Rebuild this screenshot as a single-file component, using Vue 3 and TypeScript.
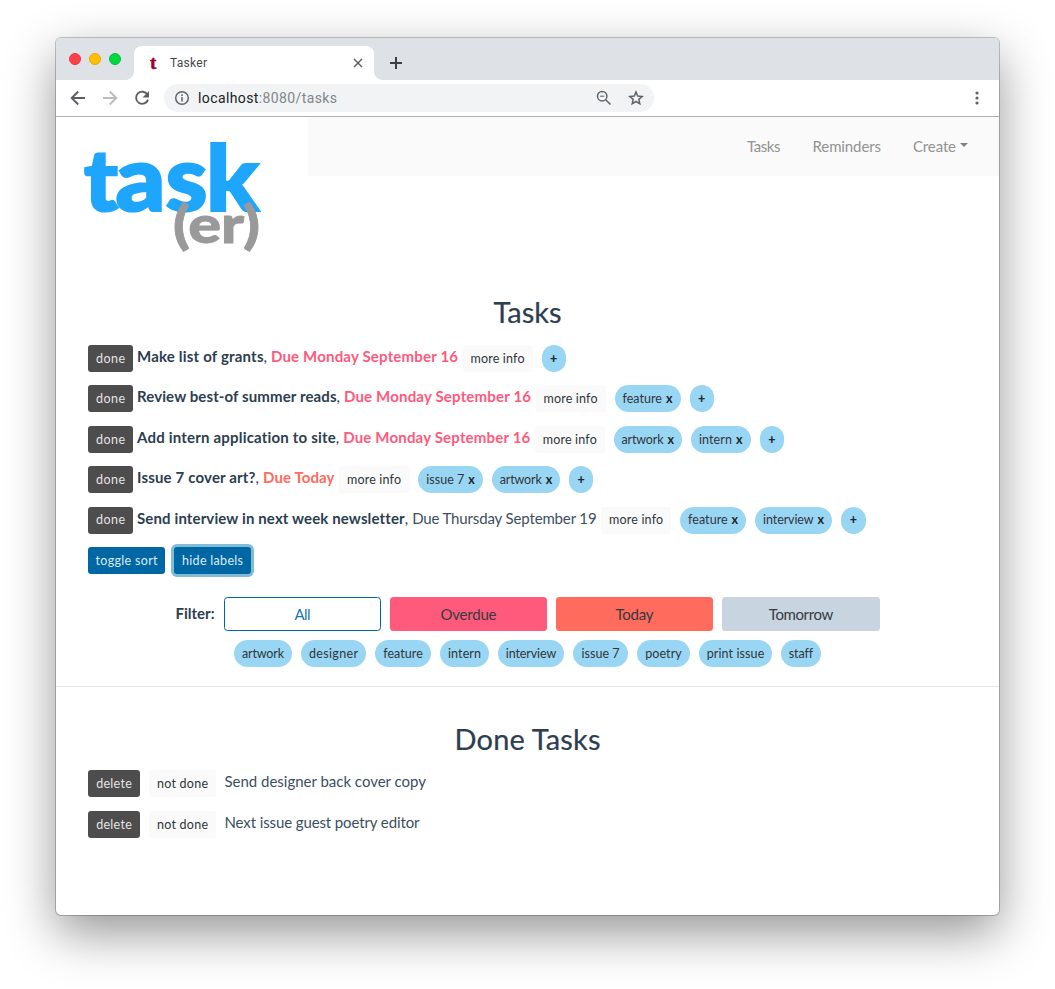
<script setup lang="ts">
interface Label { name: string; width: number; text: number }
interface Task {
  title: string
  titleWidth: number
  due: string
  dueWidth: number
  state: 'overdue' | 'today' | 'later'
  labels: Label[]
}

// Spreads the letters of an element so that its text spans the given width.
const vFit = {
  mounted(el: HTMLElement, binding: { value: number }) {
    const count = (el.textContent ?? '').length
    const natural = el.getBoundingClientRect().width
    if (count > 1) {
      el.style.letterSpacing = `${(binding.value - natural) / (count - 1)}px`
      el.style.marginRight = `${-(binding.value - natural) / (count - 1)}px`
    }
  },
}

const feature: Label = { name: 'feature', width: 66, text: 39.5 }
const artwork: Label = { name: 'artwork', width: 68, text: 42 }
const intern: Label = { name: 'intern', width: 60, text: 33 }
const issue7: Label = { name: 'issue 7', width: 65, text: 38 }
const interview: Label = { name: 'interview', width: 77, text: 50.5 }

const tasks: Task[] = [
  { title: 'Make list of grants', titleWidth: 126.5, due: 'Due Monday September 16', dueWidth: 187, state: 'overdue', labels: [] },
  { title: 'Review best-of summer reads', titleWidth: 199.5, due: 'Due Monday September 16', dueWidth: 187, state: 'overdue', labels: [feature] },
  { title: 'Add intern application to site', titleWidth: 199, due: 'Due Monday September 16', dueWidth: 187, state: 'overdue', labels: [artwork, intern] },
  { title: 'Issue 7 cover art?', titleWidth: 118.5, due: 'Due Today', dueWidth: 71.5, state: 'today', labels: [issue7, artwork] },
  { title: 'Send interview in next week newsletter', titleWidth: 267, due: 'Due Thursday September 19', dueWidth: 184.5, state: 'later', labels: [feature, interview] },
]

const filters = [
  { name: 'All', kind: 'all', text: 16 },
  { name: 'Overdue', kind: 'overdue', text: 56 },
  { name: 'Today', kind: 'today', text: 38 },
  { name: 'Tomorrow', kind: 'tomorrow', text: 64.5 },
]

const tags: Label[] = [
  { name: 'artwork', width: 58, text: 42 },
  { name: 'designer', width: 65, text: 49 },
  { name: 'feature', width: 56, text: 39.5 },
  { name: 'intern', width: 49, text: 33 },
  { name: 'interview', width: 66, text: 50.5 },
  { name: 'issue 7', width: 55, text: 38 },
  { name: 'poetry', width: 53, text: 36.5 },
  { name: 'print issue', width: 73, text: 57.5 },
  { name: 'staff', width: 40, text: 24 },
]

const doneTasks = [
  { name: 'Send designer back cover copy', width: 201.5 },
  { name: 'Next issue guest poetry editor', width: 195 },
]
</script>

<template>
  <div class="desktop">
    <div class="window">
      <header class="tabs">
        <div class="lights"><i class="red"></i><i class="yellow"></i><i class="green"></i></div>
        <div class="tab">
          <span class="favicon">t</span>
          <span class="tab-title"><span v-fit="37">Tasker</span></span>
          <svg class="close" width="10" height="10" viewBox="0 0 10 10"><path d="M1 1l8 8M9 1l-8 8" /></svg>
        </div>
        <svg class="plus" width="12" height="12" viewBox="0 0 12 12"><path d="M6 0v12M0 6h12" /></svg>
      </header>

      <div class="toolbar">
        <svg class="nav-icon" width="16" height="16" viewBox="0 0 16 16"><path d="M15 8H2M8.2 1.5L1.7 8l6.5 6.5" /></svg>
        <svg class="nav-icon faded" width="16" height="16" viewBox="0 0 16 16"><path d="M1 8h13M7.8 1.5L14.3 8l-6.5 6.5" /></svg>
        <svg class="nav-icon" width="16" height="16" viewBox="0 0 16 16"><path d="M13.4 4.6A6.1 6.1 0 1 0 14 9.6" /><path class="solid" d="M15 1v6.5H8.500z" /></svg>
        <div class="omnibox">
          <svg class="info" width="16" height="16" viewBox="0 0 16 16"><circle cx="8" cy="8" r="6.300" /><path d="M8 7v4.500M8 4.300v1.600" /></svg>
          <span class="url"><span v-fit="139"><b>localhost</b>:8080/tasks</span></span>
          <svg class="lens" width="16" height="16" viewBox="0 0 16 16"><circle cx="6.200" cy="6.200" r="4.700" /><path d="M9.700 9.700l4.800 4.800" /><path class="thin" d="M4 6.200h4.400" /></svg>
          <svg class="star" width="16" height="16" viewBox="0 0 16 16"><path d="M8 2l1.700 4.100 4.500.4-3.400 2.900 1 4.400L8 11.500l-3.800 2.300 1-4.400-3.400-2.900 4.500-.4z" /></svg>
        </div>
        <svg class="kebab" width="4" height="14" viewBox="0 0 4 14"><circle cx="2" cy="2" r="1.600" /><circle cx="2" cy="7" r="1.600" /><circle cx="2" cy="12" r="1.600" /></svg>
      </div>

      <main>
        <div class="masthead">
          <svg class="logo" width="252" height="160" viewBox="56 117 252 160">
            <g class="task">
              <text class="short" x="84" y="210.500" textLength="34" lengthAdjust="spacingAndGlyphs">t</text>
              <text x="115.500" y="210.500" textLength="50" lengthAdjust="spacingAndGlyphs">a</text>
              <text x="165.500" y="210.500" textLength="42" lengthAdjust="spacingAndGlyphs">s</text>
              <text x="206" y="210.500" textLength="53" lengthAdjust="spacingAndGlyphs">k</text>
            </g>
            <text class="er" x="173" y="243" textLength="87" lengthAdjust="spacingAndGlyphs">(er)</text>
          </svg>
          <nav>
            <a><span v-fit="33.5">Tasks</span></a>
            <a><span v-fit="68.5">Reminders</span></a>
            <a><span v-fit="43">Create</span><i class="caret"></i></a>
          </nav>
        </div>

        <h1 class="first"><span v-fit="68">Tasks</span></h1>

        <section class="list">
          <div v-for="task in tasks" :key="task.title" class="row">
            <button class="btn dark done"><span v-fit="29">done</span></button>
            <span class="summary">
              <strong v-fit="task.titleWidth">{{ task.title }}</strong><span class="comma">,</span>
              <span class="due" :class="task.state"><span v-fit="task.dueWidth">{{ task.due }}</span></span>
            </span>
            <button class="btn light more"><span v-fit="54">more info</span></button>
            <button v-for="label in task.labels" :key="label.name" class="btn pill" :style="{ width: label.width + 'px' }">
              <span v-fit="label.text">{{ label.name }}</span><b>x</b>
            </button>
            <button class="btn pill add"><b>+</b></button>
          </div>
          <div class="row toggles">
            <button class="btn blue"><span v-fit="62">toggle sort</span></button>
            <button class="btn blue focused"><span v-fit="61">hide labels</span></button>
          </div>
        </section>

        <section class="filters">
          <strong class="filter-name"><span v-fit="39">Filter:</span></strong>
          <button v-for="filter in filters" :key="filter.name" class="filter" :class="filter.kind">
            <span v-fit="filter.text">{{ filter.name }}</span>
          </button>
        </section>
        <section class="tags">
          <button v-for="tag in tags" :key="tag.name" class="btn pill" :style="{ width: tag.width + 'px' }">
            <span v-fit="tag.text">{{ tag.name }}</span>
          </button>
        </section>

        <hr />

        <h1 class="second"><span v-fit="146">Done Tasks</span></h1>
        <section class="list finished">
          <div v-for="item in doneTasks" :key="item.name" class="row">
            <button class="btn dark delete"><span v-fit="35.5">delete</span></button>
            <button class="btn light undo"><span v-fit="51">not done</span></button>
            <span class="summary"><span v-fit="item.width">{{ item.name }}</span></span>
          </div>
        </section>
      </main>
    </div>
  </div>
</template>

<style>
html, body { margin: 0; background: #fff; overflow: hidden; }
</style>

<style scoped>
* { box-sizing: border-box; }
.desktop { width: 1055px; height: 989px; padding: 38px 56px 0; overflow: hidden; background: #fff; }
.window {
  width: 943px; height: 877px; border-radius: 5px; overflow: hidden; background: #fff;
  box-shadow: 0 0 0 1px rgba(0, 0, 0, .22), 0 18px 50px rgba(0, 0, 0, .42);
  font-family: Lato, "Liberation Sans", sans-serif; color: #2c3e50;
}
svg { display: block; fill: none; flex: none; }
button { font-family: inherit; border: 0; margin: 0; padding: 0; white-space: nowrap; }

.tabs { height: 42px; background: #dee1e6; display: flex; align-items: flex-start; }
.lights { display: flex; gap: 8px; padding: 15px 0 0 13px; width: 78px; }
.lights i { width: 12px; height: 12px; border-radius: 50%; border: 1px solid; flex: none; }
.lights .red { background: #ff4049; border-color: #ee333e; }
.lights .yellow { background: #ffbf00; border-color: #e9a900; }
.lights .green { background: #00d742; border-color: #00c135; }
.tab {
  position: relative; width: 240px; height: 34px; margin-top: 8px; background: #fff; border-radius: 8px 8px 0 0;
  display: flex; align-items: center; padding: 0 11px 0 16px;
}
.tab::before, .tab::after { content: ""; position: absolute; bottom: 0; width: 8px; height: 8px; }
.tab::before { left: -8px; background: radial-gradient(circle at 0 0, transparent 7.500px, #fff 8px); }
.tab::after { right: -8px; background: radial-gradient(circle at 100% 0, transparent 7.500px, #fff 8px); }
.favicon { width: 20px; color: #a00028; font: bold 19px/34px "Liberation Serif", serif; -webkit-text-stroke: .5px #a00028; }
.tab-title { flex: 1; font: 12px/32px Roboto, sans-serif; color: #45494d; }
.close { stroke: #5f6368; stroke-width: 1.500; }
.plus { margin: 19px 0 0 16px; stroke: #3c4043; stroke-width: 2; }

.toolbar { height: 37px; border-bottom: 1px solid #b0b1b3; display: flex; align-items: center; gap: 16px; padding: 0 20px 0 14px; }
.nav-icon { stroke: #5b5f64; stroke-width: 1.900; }
.nav-icon .solid { fill: #5b5f64; stroke: none; }
.faded { stroke: #babcbe; }
.omnibox { width: 490px; height: 28px; margin-left: -2px; border-radius: 14px; background: #f1f3f4; display: flex; align-items: center; padding: 0 10px; }
.info { stroke: #5f6368; stroke-width: 1.500; }
.url { flex: 1; margin-left: 8px; font: 14px/28px Roboto, sans-serif; color: #80868b; }
.url b { font-weight: 400; color: #202124; }
.lens, .star { stroke: #5f6368; stroke-width: 1.500; }
.lens .thin { stroke-width: 1; }
.star { margin-left: 16px; }
.kebab { margin-left: auto; fill: #5f6368; }

.masthead { display: flex; height: 160px; align-items: flex-start; }
.logo { font-weight: 900; }
.task { font-size: 91px; fill: #1ea5fc; stroke: #1ea5fc; stroke-width: 2.200; }
.task .short { font-size: 85px; }
.er { font-size: 52px; fill: #999; stroke: #999; stroke-width: .8; }
nav { flex: 1; height: 59px; background: #fafafa; display: flex; justify-content: flex-end; align-items: flex-start; gap: 32px; padding: 18px 31px 0 0; font-size: 15px; line-height: 22px; color: #929292; }
nav a { display: flex; }
.caret { margin: 8px 0 0 4px; border: 4.500px solid transparent; border-top-color: #808080; border-bottom: 0; height: 0; }

h1 { margin: 0; text-align: center; font-size: 29px; line-height: 36px; font-weight: 400; -webkit-text-stroke: .2px #2c3e50; }
.first { padding-top: 17px; height: 68px; }
.list { display: flex; flex-direction: column; gap: 13.400px; padding-left: 32px; }
.row { display: flex; align-items: flex-start; height: 27px; white-space: nowrap; }
.summary { display: flex; font-size: 15px; line-height: 22.200px; margin: 0 4.500px 0 4px; }
.comma { width: 7.500px; }
.due.overdue { color: #ff5a7c; font-weight: 700; }
.due.today { color: #ff6b5c; font-weight: 700; }
.due.later, .finished .summary { color: #3d4e5f; }
.btn { height: 27px; border-radius: 3px; font-size: 12.500px; line-height: 25px; padding-bottom: .3px; display: flex; align-items: center; justify-content: center; flex: none; color: #30353a; }
.dark { background: #4d4d4d; color: #e4e4e4; }
.light { background: #fafafa; }
.done { width: 45px; }
.more { width: 70px; }
.pill { background: #99d6f4; border-radius: 14px; }
.pill b { margin-left: 4px; color: #20262b; }
.row .pill { margin-left: 9px; }
.row .add { width: 24.400px; }
.row .add b { margin: 0; font-weight: 900; }
.toggles { gap: 9px; }
.blue { width: 77px; background: #0067a5; color: #dcebf4; }
.focused { box-shadow: 0 0 0 3px #7fbcd5; }

.filters { display: flex; gap: 9px; margin-top: 23px; padding-left: 119.500px; height: 34px; }
.filter-name { width: 39.500px; font-size: 15px; line-height: 32px; }
.filter { width: 157px; height: 34px; border-radius: 3.500px; font-size: 15px; line-height: 32px; color: #343a40; }
.filter.all { background: #fff; border: 1px solid #0067a5; color: #1a76ad; line-height: 30px; }
.filter.overdue { background: #ff5a7c; }
.filter.today { background: #ff6b5c; }
.filter.tomorrow { background: #c8d5e1; width: 158px; }
.tags { display: flex; gap: 9px; padding-left: 178px; margin-top: 9px; }

hr { height: 1px; border: 0; background: #e5e6e7; margin: 19px 0 0; }
.second { padding-top: 34px; height: 83px; }
.delete { width: 52px; }
.undo { width: 67px; margin-left: 9px; }
.finished { gap: 14px; }
.finished .summary { margin-left: 8.500px; line-height: 23px; }
.finished .row:last-child .summary { line-height: 22px; }
</style>
